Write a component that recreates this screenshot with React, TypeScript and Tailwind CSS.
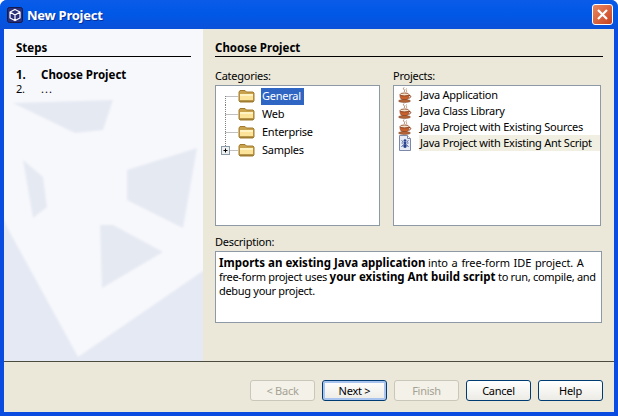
import React from 'react';

const FONT = "font-['Noto_Sans',sans-serif]";
const BOLD = 'text-[11.5px] font-bold tracking-normal';

function Folder() {
  return (
    <svg width="17" height="14" viewBox="0 0 17 14" className="shrink-0">
      <path d="M1 3 L2 1.5 H7 L8.5 3 H15 L16 4 V12 L15 13 H2 L1 12 Z" fill="#c9a24e" stroke="#a17a2c" />
      <path d="M2 5 H15 V11.5 H2 Z" fill="#fbe49a" />
      <path d="M2 5 H15 V7 H2 Z" fill="#fff3c4" />
      <path d="M2 12 H15" stroke="#8a6a24" />
    </svg>
  );
}

function Coffee() {
  return (
    <svg width="14" height="16" viewBox="0 0 14 16" className="shrink-0">
      <path d="M6 0.5 C4 2 8 3 6 5" stroke="#a87a5a" fill="none" />
      <path d="M8.5 1.5 C7 3 10 3.5 8 5.5" stroke="#c09a80" fill="none" />
      <ellipse cx="6.5" cy="7.5" rx="4.5" ry="1.5" fill="#f4e4d0" stroke="#a0603a" />
      <path d="M2 8 C2 12 4 13 6.5 13 C9 13 11 12 11 8 C9 9.5 4 9.5 2 8 Z" fill="#c8602c" stroke="#8a3e1c" strokeWidth="0.7" />
      <path d="M11 8.5 C13.5 8 13.5 11 10.5 11.2" stroke="#8a3e1c" fill="none" />
      <ellipse cx="6.5" cy="14" rx="6" ry="1.4" fill="#b8673a" stroke="#7a3f20" strokeWidth="0.6" />
    </svg>
  );
}

function AntScript() {
  return (
    <svg width="14" height="16" viewBox="0 0 14 16" className="shrink-0">
      <path d="M1.5 0.5 H9.5 L12.5 3.5 V15.5 H1.5 Z" fill="#e6ebf5" stroke="#7c88a8" />
      <path d="M9.5 0.5 V3.5 H12.5" fill="#fff" stroke="#7c88a8" />
      <ellipse cx="7" cy="5.5" rx="1.4" ry="1.3" fill="#27408b" />
      <ellipse cx="7" cy="8" rx="1.2" ry="1.3" fill="#27408b" />
      <ellipse cx="7" cy="11" rx="1.7" ry="2" fill="#27408b" />
      <path d="M5.5 7 L3.5 5.5 M8.5 7 L10.5 5.5 M5.5 8 H3.5 M8.5 8 H10.5 M5.5 9.5 L3.5 12 M8.5 9.5 L10.5 12" stroke="#27408b" strokeWidth="0.8" />
    </svg>
  );
}

function Connector({ kind }: { kind: 'first' | 'mid' | 'last' }) {
  const y1 = kind === 'first' ? 9 : 0;
  const y2 = kind === 'last' ? 9 : 18;
  return (
    <svg width="22" height="18" viewBox="0 0 22 18" className="shrink-0">
      <path d={`M9.5 ${y1} V${y2} M9.5 9.5 H22`} stroke="#808080" strokeDasharray="1 1" fill="none" />
      {kind === 'last' && (
        <g>
          <rect x="5.5" y="5.5" width="8" height="8" fill="#eef0f2" stroke="#8a99a8" />
          <path d="M7.5 9.5 H11.5 M9.5 7.5 V11.5" stroke="#000" />
        </g>
      )}
    </svg>
  );
}

function Watermark() {
  return (
    <svg width="199" height="332" viewBox="0 0 199 332" className="absolute inset-0">
      <defs>
        <filter id="soft">
          <feGaussianBlur stdDeviation="1.2" />
        </filter>
      </defs>
      <rect width="199" height="332" fill="#e5e9f3" />
      <g filter="url(#soft)">
        <path d="M-5 -5 H205 V238 L74 328 L4 200 L-5 180 Z" fill="#f7f8fc" />
        <path d="M9 74 L109 71 L99 101 L71 104 Z" fill="#e5e9f2" />
        <path d="M19 131 L39 148 L43 178 L29 189 Z" fill="#e5e9f2" />
        <path d="M123 141 L193 119 L179 199 L123 171 Z" fill="#e5e9f2" />
        <path d="M96 196 L109 196 L159 223 L98 259 Z" fill="#e5e9f2" />
      </g>
    </svg>
  );
}

function WizardButton({ label, state }: { label: string; state?: 'disabled' | 'default' }) {
  if (state === 'disabled') {
    return (
      <div className="flex h-[21px] w-[65px] items-center justify-center rounded-[3px] border border-[#c9c7ba] bg-[#f3f1e8] text-[#a5a294]">
        {label}
      </div>
    );
  }
  return (
    <div
      className={`flex h-[21px] w-[65px] items-center justify-center rounded-[3px] border border-[#003c74] bg-gradient-to-b from-white to-[#ecebe5] text-black ${
        state === 'default' ? 'shadow-[inset_0_0_0_2px_#a9c4ee]' : ''
      }`}
    >
      {label}
    </div>
  );
}

export default function App() {
  const categories = ['General', 'Web', 'Enterprise', 'Samples'];
  const projects = [
    'Java Application',
    'Java Class Library',
    'Java Project with Existing Sources',
    'Java Project with Existing Ant Script',
  ];

  return (
    <div className={`flex h-[416px] w-[618px] flex-col overflow-hidden rounded-t-[7px] bg-[#0a4be0] text-[11px] leading-[14px] tracking-[-0.25px] text-black ${FONT}`}>
      {/* title bar */}
      <div className="flex h-[29px] shrink-0 items-center bg-gradient-to-b from-[#0a5be8] via-[#0058e6] to-[#0a50d8] pl-[7px] pr-[5px]">
        <svg width="16" height="16" viewBox="0 0 16 16" className="shrink-0">
          <rect x="0.5" y="0.5" width="15" height="15" rx="2" fill="#2a2f7a" stroke="#16194a" />
          <path d="M8 2.5 L13 5 V11 L8 13.5 L3 11 V5 Z M3 5 L8 8 L13 5 M8 8 V13.5" fill="none" stroke="#fff" strokeWidth="1.2" />
        </svg>
        <span className="ml-[4px] text-[13px] font-bold text-white [text-shadow:1px_1px_0_#0a2f9a]">New Project</span>
        <div className="ml-auto flex h-[21px] w-[21px] items-center justify-center rounded-[3px] border border-white bg-gradient-to-br from-[#e8875f] to-[#c8401c]">
          <svg width="13" height="13" viewBox="0 0 13 13">
            <path d="M2 2 L11 11 M11 2 L2 11" stroke="#fff" strokeWidth="2.2" />
          </svg>
        </div>
      </div>

      {/* client area */}
      <div className="mx-[4px] mb-[4px] flex min-h-0 flex-1 flex-col bg-[#ebe8da]">
        <div className="flex h-[332px] shrink-0">
          {/* steps panel */}
          <div className="relative w-[199px] shrink-0 overflow-hidden">
            <Watermark />
            <div className="relative px-[12px] pt-[12px]">
              <div className={`h-[16px] border-b border-black pb-[1px] ${BOLD}`}>Steps</div>
              <div className={`mt-[11px] flex h-[14px] ${BOLD}`}>
                <span className="w-[25px]">1.</span>
                <span>Choose Project</span>
              </div>
              <div className="flex h-[14px]">
                <span className="w-[25px]">2.</span>
                <span className="tracking-[1px]">...</span>
              </div>
            </div>
          </div>

          {/* content */}
          <div className="flex-1 pl-[12px] pr-[11px] pt-[12px]">
            <div className={`h-[16px] border-b border-black ${BOLD}`}>Choose Project</div>
            <div className="mt-[12px] flex gap-[13px]">
              <div className="w-[165px]">
                <div className="h-[16px]">Categories:</div>
                <div className="h-[141px] border border-[#8d9aa6] bg-white pt-[1px]">
                  {categories.map((c, i) => (
                    <div key={c} className="flex h-[18px] items-center">
                      <Connector kind={i === 0 ? 'first' : i === 3 ? 'last' : 'mid'} />
                      <Folder />
                      <span className={`ml-[6px] px-[1px] ${i === 0 ? 'flex h-[17px] items-center bg-[#2f66c4] pr-[3px] text-white' : ''}`}>{c}</span>
                    </div>
                  ))}
                </div>
              </div>
              <div className="w-[208px]">
                <div className="h-[16px]">Projects:</div>
                <div className="h-[141px] border border-[#8d9aa6] bg-white pt-[1px]">
                  {projects.map((p, i) => (
                    <div key={p} className="flex h-[16px] items-center pl-[4px]">
                      {i === 3 ? <AntScript /> : <Coffee />}
                      <span className={`ml-[7px] flex h-[16px] flex-1 items-center pl-[1px] ${i === 3 ? 'bg-[#f1efe2]' : ''}`}>{p}</span>
                    </div>
                  ))}
                </div>
              </div>
            </div>
            <div className="mt-[9px] h-[16px]">Description:</div>
            <div className="h-[72px] w-[387px] border border-[#8d9aa6] bg-white px-[3px] pt-[4px] tracking-[-0.3px]">
              <b className={BOLD}>Imports an existing Java application</b>{' '}
              <span className="tracking-[-0.1px] [word-spacing:1px]">into a free-form IDE project. A</span>{' '}
              <span className="whitespace-nowrap">free-form</span> project uses <b className={BOLD}>your existing Ant build script</b> to run, compile, and debug your project.
            </div>
          </div>
        </div>

        {/* footer */}
        <div className="flex flex-1 items-start justify-end gap-[7px] border-t border-[#4b4b40] pr-[11px] pt-[18px]">
          <WizardButton label="< Back" state="disabled" />
          <WizardButton label="Next >" state="default" />
          <WizardButton label="Finish" state="disabled" />
          <WizardButton label="Cancel" />
          <WizardButton label="Help" />
        </div>
      </div>
    </div>
  );
}
